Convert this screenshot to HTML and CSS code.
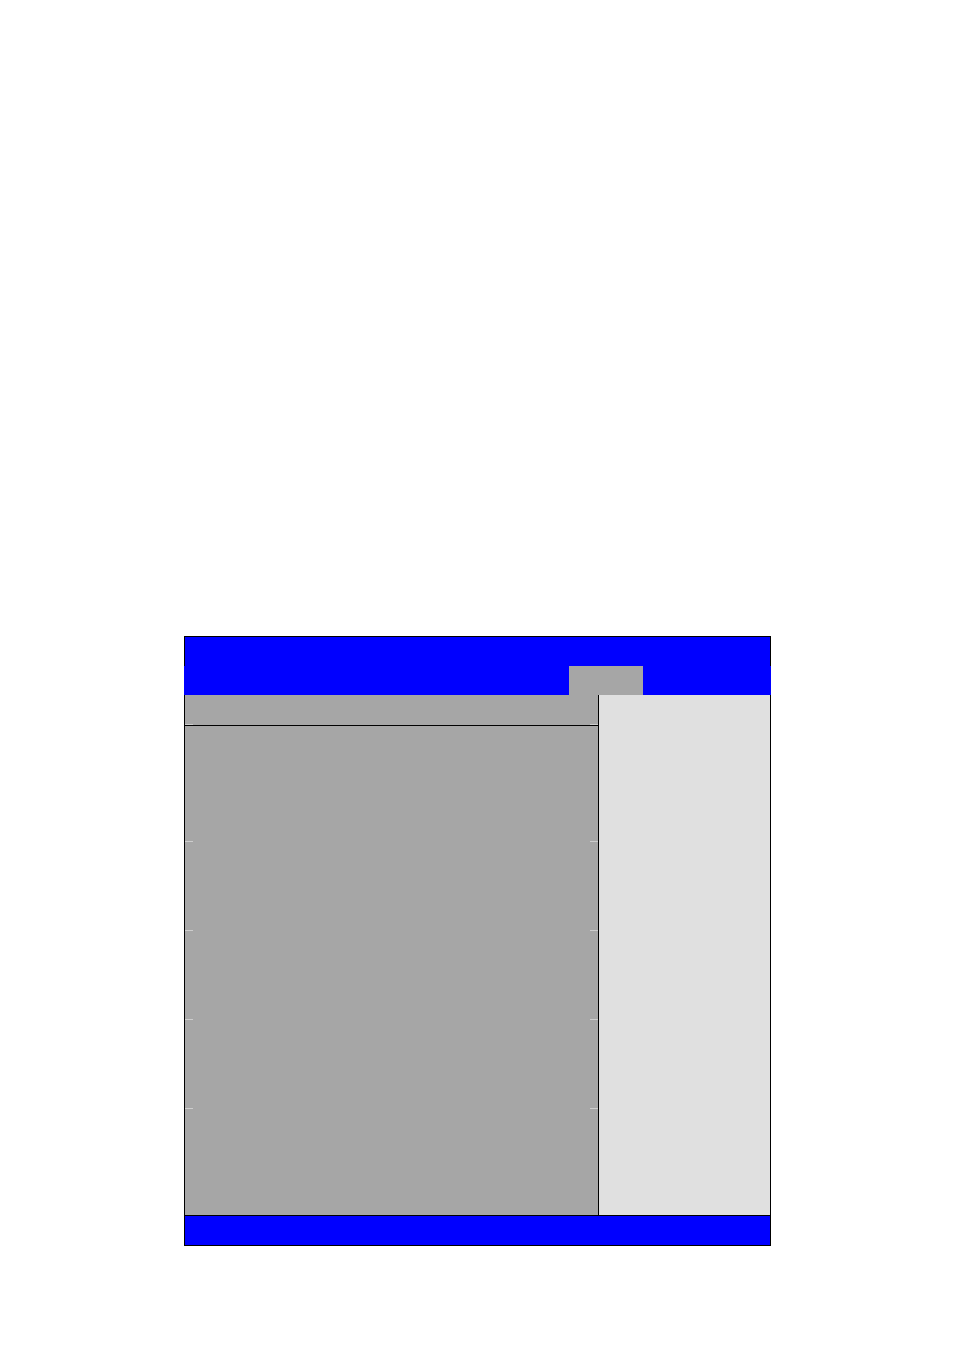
FILE: index.html
```html
<!DOCTYPE html>
<html lang="en">
<head>
  <meta charset="UTF-8">
  <title>Setup</title>
  <link rel="stylesheet" href="styles.css">
</head>
<body>
  <div class="screen">
    <div class="title-bar"></div>
    <div class="menu-bar">
      <span class="tab"></span>
    </div>
    <div class="main">
      <div class="items">
        <div class="items-head"></div>
        <div class="rule"><i></i><i></i></div>
        <div class="head-line"></div>
        <div class="group first"></div>
        <div class="rule"><i></i><i></i></div>
        <div class="group"></div>
        <div class="rule"><i></i><i></i></div>
        <div class="group"></div>
        <div class="rule"><i></i><i></i></div>
        <div class="group"></div>
        <div class="rule"><i></i><i></i></div>
        <div class="group last"></div>
      </div>
      <div class="help"></div>
    </div>
    <div class="status-bar"></div>
  </div>
</body>
</html>
```

FILE: styles.css
```css
body{
  margin:0;
  background-color:#ffffff;
  font-family:"Liberation Sans", Arial, sans-serif;
}

.screen{
  width:585px;
  height:608px;
  margin-top:636px;
  margin-left:184px;
  border:1px solid #000000;
  display:flex;
  flex-direction:column;
}

.title-bar{
  height:29px;
  background-color:#0000ff;
}

/* lower half of the header runs over the frame edges */
.menu-bar{
  height:29px;
  margin-left:-1px;
  margin-right:-1px;
  background-color:#0000ff;
  display:flex;
}
.tab{
  width:74px;
  margin-left:385px;
  background-color:#a6a6a6;
}

.main{
  height:520px;
  display:flex;
  border-bottom:1px solid #000000;
}

.items{
  width:413px;
  background-color:#a6a6a6;
  border-right:1px solid #000000;
  display:flex;
  flex-direction:column;
}
.items-head{
  height:29px;
}
.head-line{
  height:1px;
  background-color:#000000;
}
.group{
  height:88px;
}
.group.first{
  height:115px;
}
.group.last{
  flex:1;
}

.rule{
  height:1px;
  display:flex;
  justify-content:space-between;
}
.rule i{
  width:8px;
  background-color:#cdcdcd;
}

.help{
  flex:1;
  background-color:#e0e0e0;
}

.status-bar{
  height:29px;
  background-color:#0000ff;
}
```
